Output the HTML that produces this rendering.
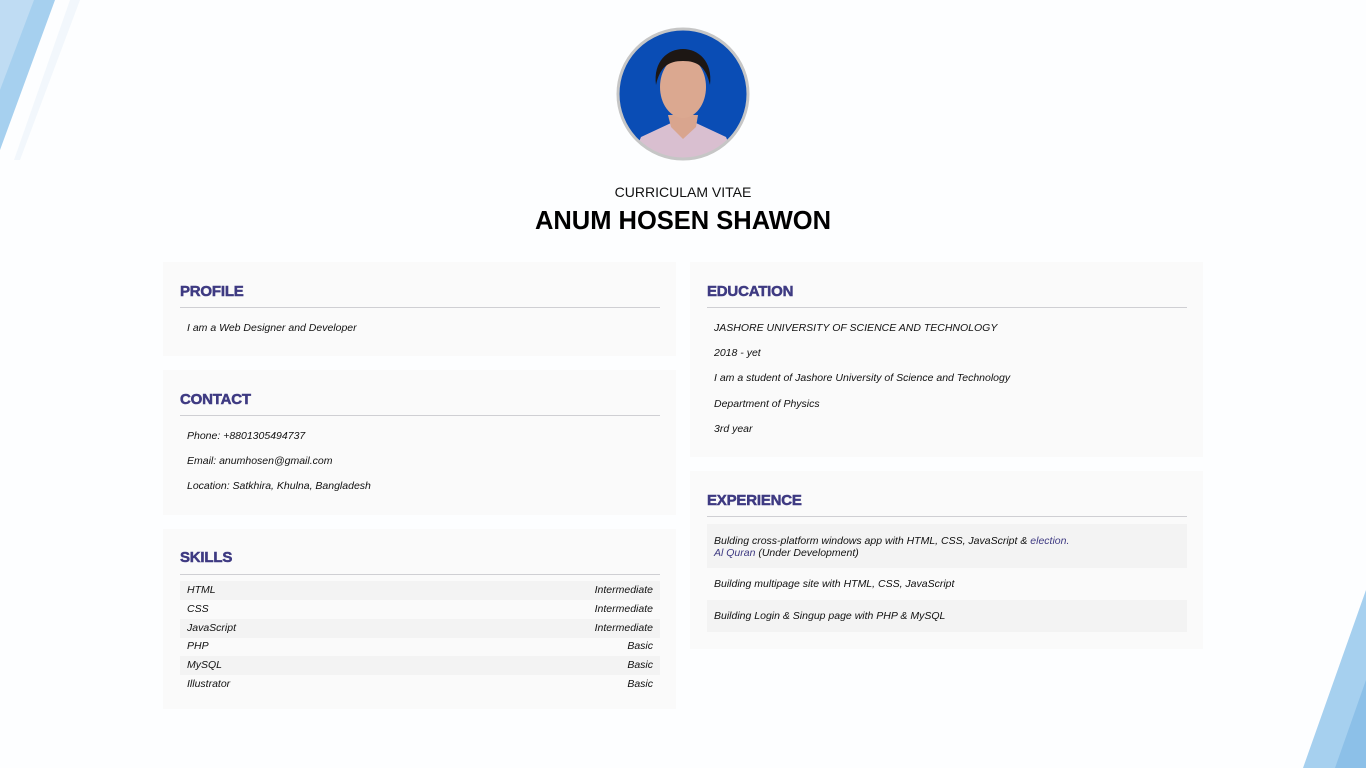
<!DOCTYPE html>
<html><head><meta charset="utf-8"><style>
*{margin:0;padding:0;box-sizing:border-box}
body{width:1366px;height:768px;overflow:hidden;position:relative;background:#fdfeff;font-family:"Liberation Sans",Arial,sans-serif;color:#111}
.a{position:absolute}
.card{position:absolute;background:#fafafa}
.h{position:absolute;left:17px;font-weight:bold;font-size:15px;color:#3e3a82;letter-spacing:-0.2px;line-height:18px;-webkit-text-stroke:0.5px #3e3a82}
.line{position:absolute;left:17px;right:16px;height:1px;background:#cfcfd3}
.t{position:absolute;left:24px;font-size:10.5px;font-style:italic;line-height:13px;white-space:nowrap}
.row{position:absolute;left:17px;right:16px;height:19px;font-size:10.5px;font-style:italic;line-height:19px;padding:0 7px}
.row span{float:right}
.g{background:#f3f3f3}
</style></head><body>
<svg class="a" style="left:0;top:0" width="1366" height="768">
<polygon points="0,0 55,0 0,150" fill="#a6d0ef"/>
<polygon points="0,0 34,0 0,90" fill="#bfdcf3"/>
<polygon points="70,0 80,0 20,160 14,160" fill="#f2f7fc"/>
<polygon points="1366,590 1366,768 1303,768" fill="#a6d0ef"/>
<polygon points="1366,680 1366,768 1335,768" fill="#8cc0e8"/>
</svg>
<svg class="a" style="left:616px;top:27px" width="134" height="134">
<defs><clipPath id="c"><circle cx="67" cy="67" r="64"/></clipPath></defs>
<g clip-path="url(#c)">
<rect width="134" height="134" fill="#0a4db5"/>
<path d="M15 134 L25 110 L55 96 L80 96 L110 110 L120 134Z" fill="#d9bfd0"/>
<path d="M52 88 L55 100 L67 112 L80 100 L82 88Z" fill="#d9a58e"/>
<ellipse cx="67" cy="60" rx="23" ry="31" fill="#dba890"/>
<path d="M40 58 C34 10 100 10 94 58 C90 40 82 34 67 34 C52 34 44 40 40 58Z" fill="#1d1714"/>
</g>
<circle cx="67" cy="67" r="65" fill="none" stroke="#c6c6c6" stroke-width="3"/>
</svg>
<div class="a" style="left:0;width:1366px;top:184px;text-align:center;font-size:14px;line-height:16px">CURRICULAM VITAE</div>
<div class="a" style="left:0;width:1366px;top:206px;text-align:center;font-size:25.5px;font-weight:bold;line-height:30px;color:#000">ANUM HOSEN SHAWON</div>

<div class="card" style="left:163px;top:262px;width:513px;height:94px">
<div class="h" style="top:21px">PROFILE</div><div class="line" style="top:45px"></div>
<div class="t" style="top:60px">I am a Web Designer and Developer</div>
</div>
<div class="card" style="left:163px;top:370px;width:513px;height:145px">
<div class="h" style="top:21px">CONTACT</div><div class="line" style="top:45px"></div>
<div class="t" style="top:60px">Phone: +8801305494737</div>
<div class="t" style="top:85px">Email: anumhosen@gmail.com</div>
<div class="t" style="top:110px">Location: Satkhira, Khulna, Bangladesh</div>
</div>
<div class="card" style="left:163px;top:529px;width:513px;height:180px">
<div class="h" style="top:20px">SKILLS</div><div class="line" style="top:45px"></div>
<div class="row g" style="top:52px">HTML<span>Intermediate</span></div>
<div class="row" style="top:71px">CSS<span>Intermediate</span></div>
<div class="row g" style="top:90px">JavaScript<span>Intermediate</span></div>
<div class="row" style="top:108px">PHP<span>Basic</span></div>
<div class="row g" style="top:127px">MySQL<span>Basic</span></div>
<div class="row" style="top:146px">Illustrator<span>Basic</span></div>
</div>

<div class="card" style="left:690px;top:262px;width:513px;height:195px">
<div class="h" style="top:21px">EDUCATION</div><div class="line" style="top:45px"></div>
<div class="t" style="top:60px">JASHORE UNIVERSITY OF SCIENCE AND TECHNOLOGY</div>
<div class="t" style="top:85px">2018 - yet</div>
<div class="t" style="top:110px">I am a student of Jashore University of Science and Technology</div>
<div class="t" style="top:136px">Department of Physics</div>
<div class="t" style="top:161px">3rd year</div>
</div>
<div class="card" style="left:690px;top:471px;width:513px;height:178px">
<div class="h" style="top:21px">EXPERIENCE</div><div class="line" style="top:45px"></div>
<div class="row g" style="top:53px;height:44px;line-height:12px;padding-top:11px">Bulding cross-platform windows app with HTML, CSS, JavaScript &amp; <span style="float:none;color:#3e3a82">election.</span><br><span style="float:none;color:#3e3a82">Al Quran</span> (Under Development)</div>
<div class="t" style="top:107px">Building multipage site with HTML, CSS, JavaScript</div>
<div class="row g" style="top:129px;height:32px;line-height:32px">Building Login &amp; Singup page with PHP &amp; MySQL</div>
</div>
</body></html>
